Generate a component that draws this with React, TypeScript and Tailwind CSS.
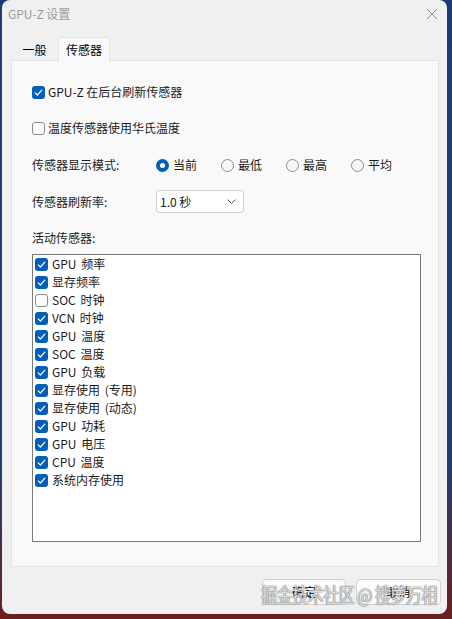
import React from 'react';

const sensors: [string, boolean][] = [
  ['GPU 频率', true],
  ['显存频率', true],
  ['SOC 时钟', false],
  ['VCN 时钟', true],
  ['GPU 温度', true],
  ['SOC 温度', true],
  ['GPU 负载', true],
  ['显存使用 (专用)', true],
  ['显存使用 (动态)', true],
  ['GPU 功耗', true],
  ['GPU 电压', true],
  ['CPU 温度', true],
  ['系统内存使用', true],
];

function Check({ on }: { on: boolean }) {
  if (!on) {
    return <span className="w-[13px] h-[13px] rounded-[3px] border border-[#8b8b8b] bg-[#fdfdfd] shrink-0" />;
  }
  return (
    <span className="w-[13px] h-[13px] rounded-[3px] bg-[#005fb8] flex items-center justify-center shrink-0">
      <svg width="13" height="13" viewBox="0 0 13 13">
        <path d="M3.2 6.8 L5.4 9 L9.8 4.2" fill="none" stroke="white" strokeWidth="1.2" strokeLinecap="round" strokeLinejoin="round" />
      </svg>
    </span>
  );
}

function Radio({ label, on }: { label: string; on?: boolean }) {
  return (
    <div className="w-[65px] flex items-center gap-[4px]">
      {on ? (
        <span className="w-[13px] h-[13px] rounded-full bg-[#005fb8] flex items-center justify-center">
          <span className="w-[5px] h-[5px] rounded-full bg-white" />
        </span>
      ) : (
        <span className="w-[13px] h-[13px] rounded-full border border-[#8b8b8b] bg-[#f6f6f6]" />
      )}
      <span>{label}</span>
    </div>
  );
}

export default function App() {
  return (
    <div className="w-[452px] h-[619px] bg-[linear-gradient(180deg,#1d3b78_0%,#243d70_75%,#6a1f1f_100%)] pl-[2px] pr-[5px] pb-[5px] font-['Noto_Sans_CJK_SC',sans-serif] text-[12px] text-[#1b1b1b] relative">
      <div className="h-full bg-[#f0f0f0] rounded-[8px] flex flex-col overflow-hidden">
        {/* title bar */}
        <div className="h-[28px] flex items-center justify-between pl-[6px] pr-[8px]">
          <span className="text-[#9a9a9a] text-[12px]">GPU-Z 设置</span>
          <svg width="12" height="12" viewBox="0 0 12 12" className="mr-[1px]">
            <path d="M1 1 L11 11 M11 1 L1 11" stroke="#8a8a8a" strokeWidth="1" />
          </svg>
        </div>

        <div className="flex-1 flex flex-col pl-[9px] pr-[8px]">
          {/* tabs */}
          <div className="flex items-end h-[32px] pt-[8px]">
            <div className="w-[47px] h-[21px] flex items-center justify-center text-[12px] text-black">一般</div>
            <div className="w-[52px] h-[24px] flex items-center justify-center bg-[#f9f9f9] border border-b-0 border-[#e3e3e3] rounded-t-[3px] -mb-px relative z-10 text-black">
              传感器
            </div>
          </div>

          {/* panel */}
          <div className="h-[507px] bg-[#f9f9f9] border border-[#e3e3e3] pl-[20px] pr-[17px] pt-[21px] flex flex-col">
            <div className="h-[20px] flex items-center gap-[3px]">
              <Check on />
              <span>GPU-Z 在后台刷新传感器</span>
            </div>
            <div className="h-[20px] mt-[16px] flex items-center gap-[3px]">
              <Check on={false} />
              <span>温度传感器使用华氏温度</span>
            </div>
            <div className="h-[20px] mt-[17px] flex items-center">
              <span className="w-[124px]">传感器显示模式:</span>
              <Radio label="当前" on />
              <Radio label="最低" />
              <Radio label="最高" />
              <Radio label="平均" />
            </div>
            <div className="h-[23px] mt-[15px] flex items-center">
              <span className="w-[124px]">传感器刷新率:</span>
              <div className="w-[88px] h-[23px] bg-white border border-[#cfcfcf] rounded-[3px] flex items-center justify-between pl-[3px] pr-[7px]">
                <span>1.0 秒</span>
                <svg width="9" height="5" viewBox="0 0 9 5">
                  <path d="M0.5 0.5 L4.5 4.5 L8.5 0.5" fill="none" stroke="#555" strokeWidth="1" />
                </svg>
              </div>
            </div>
            <div className="h-[20px] mt-[15px] flex items-center">活动传感器:</div>
            <div className="mt-[6px] h-[288px] bg-white border border-[#7a7a7a] pl-[2px] flex flex-col">
              {sensors.map(([name, on]) => (
                <div key={name} className="h-[18px] flex items-center gap-[4px]">
                  <Check on={on} />
                  <span className="[word-spacing:2px]">{name}</span>
                </div>
              ))}
            </div>
          </div>

          {/* buttons */}
          <div className="mt-[12px] flex justify-end gap-[10px]">
            <button className="w-[84px] h-[26px] rounded-[4px] border border-[#d0d0d0] bg-[#fbfbfb] text-[12px] text-black">确定</button>
            <button className="w-[85px] h-[26px] rounded-[4px] border border-[#d0d0d0] bg-[#fbfbfb] text-[12px] text-black mr-[-2px]">取消</button>
          </div>
        </div>
      </div>

      {/* watermark */}
      <div className="absolute right-[15px] top-[581px] text-[16px] leading-[26px] tracking-[-0.5px] text-[#eeeeee]/90 scale-y-[1.25] [text-shadow:0_0_1px_#555,0_0_1px_#777] pointer-events-none">
        掘金技术社区 @ 搜萝万相
      </div>
    </div>
  );
}
